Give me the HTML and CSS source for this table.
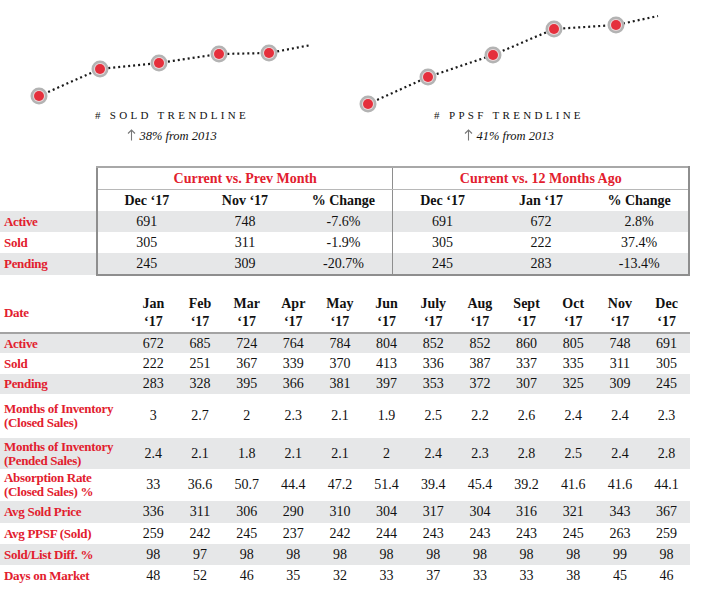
FILE: index.html
```html
<!DOCTYPE html>
<html lang="en">
<head>
<meta charset="utf-8">
<title>Market Report</title>
<link rel="stylesheet" href="styles.css">
</head>
<body>
<div class="charts">
  <div class="chart">
    <svg class="plot" width="351" height="106" viewBox="0 0 351 106">
      <polyline class="dots" points="39,96 100,69 159,63 219,54 269,53 311,45"/>
      <g><circle class="ring" cx="39" cy="96" r="8.5"/><circle class="halo" cx="39" cy="96" r="6"/><circle class="core" cx="39" cy="96" r="5"/></g>
      <g><circle class="ring" cx="100" cy="69" r="8.5"/><circle class="halo" cx="100" cy="69" r="6"/><circle class="core" cx="100" cy="69" r="5"/></g>
      <g><circle class="ring" cx="159" cy="63" r="8.5"/><circle class="halo" cx="159" cy="63" r="6"/><circle class="core" cx="159" cy="63" r="5"/></g>
      <g><circle class="ring" cx="219" cy="54" r="8.5"/><circle class="halo" cx="219" cy="54" r="6"/><circle class="core" cx="219" cy="54" r="5"/></g>
      <g><circle class="ring" cx="269" cy="53" r="8.5"/><circle class="halo" cx="269" cy="53" r="6"/><circle class="core" cx="269" cy="53" r="5"/></g>
    </svg>
    <div class="cap cap-left">
      <div class="cap-title"># SOLD TRENDLINE</div>
      <div class="cap-sub"><svg class="arrow" width="9" height="12" viewBox="0 0 9 12"><path d="M4.5 11.5V1M1 4.5L4.5 1L8 4.5"/></svg> 38% from 2013</div>
    </div>
  </div>
  <div class="chart">
    <svg class="plot" width="351" height="106" viewBox="0 0 351 106">
      <polyline class="dots" points="17,104 77,77 142,55 203,29 265,25 307,16"/>
      <g><circle class="ring" cx="17" cy="104" r="8.5"/><circle class="halo" cx="17" cy="104" r="6"/><circle class="core" cx="17" cy="104" r="5"/></g>
      <g><circle class="ring" cx="77" cy="77" r="8.5"/><circle class="halo" cx="77" cy="77" r="6"/><circle class="core" cx="77" cy="77" r="5"/></g>
      <g><circle class="ring" cx="142" cy="55" r="8.5"/><circle class="halo" cx="142" cy="55" r="6"/><circle class="core" cx="142" cy="55" r="5"/></g>
      <g><circle class="ring" cx="203" cy="29" r="8.5"/><circle class="halo" cx="203" cy="29" r="6"/><circle class="core" cx="203" cy="29" r="5"/></g>
      <g><circle class="ring" cx="265" cy="25" r="8.5"/><circle class="halo" cx="265" cy="25" r="6"/><circle class="core" cx="265" cy="25" r="5"/></g>
    </svg>
    <div class="cap cap-right">
      <div class="cap-title"># PPSF TRENDLINE</div>
      <div class="cap-sub"><svg class="arrow" width="9" height="12" viewBox="0 0 9 12"><path d="M4.5 11.5V1M1 4.5L4.5 1L8 4.5"/></svg> 41% from 2013</div>
    </div>
  </div>
</div>

<table class="cmp">
  <colgroup><col class="col-lab"><col class="col-d"><col class="col-d"><col class="col-d"><col class="col-d"><col class="col-d"><col class="col-d"></colgroup>
  <tr class="r-title">
    <td class="lab"></td>
    <th colspan="3" class="grp first">Current vs. Prev Month</th>
    <th colspan="3" class="grp mid end">Current vs. 12 Months Ago</th>
  </tr>
  <tr class="r-head">
    <td class="lab"></td>
    <th class="first">Dec ‘17</th><th>Nov ‘17</th><th>% Change</th>
    <th class="mid">Dec ‘17</th><th>Jan ‘17</th><th class="end">% Change</th>
  </tr>
  <tr class="shade">
    <td class="lab">Active</td>
    <td class="first">691</td><td>748</td><td>-7.6%</td>
    <td class="mid">691</td><td>672</td><td class="end">2.8%</td>
  </tr>
  <tr>
    <td class="lab">Sold</td>
    <td class="first">305</td><td>311</td><td>-1.9%</td>
    <td class="mid">305</td><td>222</td><td class="end">37.4%</td>
  </tr>
  <tr class="shade r-last">
    <td class="lab">Pending</td>
    <td class="first">245</td><td>309</td><td>-20.7%</td>
    <td class="mid">245</td><td>283</td><td class="end">-13.4%</td>
  </tr>
</table>

<table class="mkt">
  <colgroup><col class="col-lab2"><col span="12" class="col-m"></colgroup>
  <thead>
    <tr>
      <th class="lab">Date</th>
      <th>Jan<br>‘17</th><th>Feb<br>‘17</th><th>Mar<br>‘17</th><th>Apr<br>‘17</th><th>May<br>‘17</th><th>Jun<br>‘17</th>
      <th>July<br>‘17</th><th>Aug<br>‘17</th><th>Sept<br>‘17</th><th>Oct<br>‘17</th><th>Nov<br>‘17</th><th>Dec<br>‘17</th>
    </tr>
  </thead>
  <tbody>
    <tr class="shade h19"><td class="lab">Active</td><td>672</td><td>685</td><td>724</td><td>764</td><td>784</td><td>804</td><td>852</td><td>852</td><td>860</td><td>805</td><td>748</td><td>691</td></tr>
    <tr class="h21"><td class="lab">Sold</td><td>222</td><td>251</td><td>367</td><td>339</td><td>370</td><td>413</td><td>336</td><td>387</td><td>337</td><td>335</td><td>311</td><td>305</td></tr>
    <tr class="shade h20"><td class="lab">Pending</td><td>283</td><td>328</td><td>395</td><td>366</td><td>381</td><td>397</td><td>353</td><td>372</td><td>307</td><td>325</td><td>309</td><td>245</td></tr>
    <tr class="h44"><td class="lab">Months of Inventory<br>(Closed Sales)</td><td>3</td><td>2.7</td><td>2</td><td>2.3</td><td>2.1</td><td>1.9</td><td>2.5</td><td>2.2</td><td>2.6</td><td>2.4</td><td>2.4</td><td>2.3</td></tr>
    <tr class="shade h31"><td class="lab">Months of Inventory<br>(Pended Sales)</td><td>2.4</td><td>2.1</td><td>1.8</td><td>2.1</td><td>2.1</td><td>2</td><td>2.4</td><td>2.3</td><td>2.8</td><td>2.5</td><td>2.4</td><td>2.8</td></tr>
    <tr class="h32"><td class="lab">Absorption Rate<br>(Closed Sales) %</td><td>33</td><td>36.6</td><td>50.7</td><td>44.4</td><td>47.2</td><td>51.4</td><td>39.4</td><td>45.4</td><td>39.2</td><td>41.6</td><td>41.6</td><td>44.1</td></tr>
    <tr class="shade h22"><td class="lab">Avg Sold Price</td><td>336</td><td>311</td><td>306</td><td>290</td><td>310</td><td>304</td><td>317</td><td>304</td><td>316</td><td>321</td><td>343</td><td>367</td></tr>
    <tr class="h21"><td class="lab">Avg PPSF (Sold)</td><td>259</td><td>242</td><td>245</td><td>237</td><td>242</td><td>244</td><td>243</td><td>243</td><td>243</td><td>245</td><td>263</td><td>259</td></tr>
    <tr class="shade h21"><td class="lab">Sold/List Diff. %</td><td>98</td><td>97</td><td>98</td><td>98</td><td>98</td><td>98</td><td>98</td><td>98</td><td>98</td><td>98</td><td>99</td><td>98</td></tr>
    <tr class="h21"><td class="lab">Days on Market</td><td>48</td><td>52</td><td>46</td><td>35</td><td>32</td><td>33</td><td>37</td><td>33</td><td>33</td><td>38</td><td>45</td><td>46</td></tr>
  </tbody>
</table>
</body>
</html>
```

FILE: styles.css
```css
html, body {
  margin: 0;
  padding: 0;
  background: #ffffff;
}
body {
  width: 702px;
  height: 594px;
  overflow: hidden;
  font-family: "Liberation Serif", "Times New Roman", serif;
  color: #111111;
}

/* ---------- trend charts ---------- */
.charts {
  display: flex;
  height: 166px;
}
.chart {
  width: 351px;
}
.plot {
  display: block;
  overflow: visible;
}
.dots {
  fill: none;
  stroke: #1a1a1a;
  stroke-width: 2.2;
  stroke-dasharray: 2 3;
}
.ring { fill: #b3b3b3; }
.halo { fill: #e9d6d8; }
.core { fill: #e52f3c; }

.cap {
  text-align: center;
}
.cap-left { padding-right: 7px; }
.cap-right { padding-right: 35px; }
.cap-title {
  font-size: 11px;
  letter-spacing: 3.3px;
  line-height: 18px;
  color: #111;
}
.cap-sub {
  margin-top: 3px;
  font-size: 12.5px;
  font-style: italic;
  line-height: 18px;
  color: #111;
}
.arrow {
  vertical-align: -1px;
}
.arrow path {
  fill: none;
  stroke: #777;
  stroke-width: 1.1;
}

/* ---------- comparison table ---------- */
table {
  border-collapse: collapse;
  table-layout: fixed;
  border-spacing: 0;
}
.cmp {
  width: 690px;
}
.col-lab { width: 97px; }
.cmp th, .cmp td {
  padding: 0;
  text-align: center;
  font-size: 14px;
  height: 21px;
  line-height: 16px;
}
.cmp th {
  font-weight: bold;
  color: #111;
}
.cmp .grp {
  color: #e2202e;
  border-top: 2px solid #a8a8a8;
  border-bottom: 1px solid #b8b8b8;
}
.cmp .first { border-left: 2px solid #8e8e8e; }
.cmp .mid { border-left: 1px solid #8e8e8e; }
.cmp .end { border-right: 2px solid #8e8e8e; }
.cmp .r-last td { border-bottom: 2px solid #8e8e8e; }
.cmp .r-last td.lab { border-bottom: none; }
.cmp td.lab, .mkt .lab {
  text-align: left;
  padding-left: 4px;
  font-weight: bold;
  font-size: 13px;
  letter-spacing: -0.3px;
  color: #e2202e;
}
.shade td {
  background: #e6e7e8;
}

/* ---------- monthly table ---------- */
.mkt {
  width: 690px;
  margin-top: 16px;
}
.col-lab2 { width: 130px; }
.mkt th {
  font-size: 14px;
  font-weight: bold;
  line-height: 18px;
  text-align: center;
  padding: 3px 0 1px;
  vertical-align: middle;
  border-bottom: 2px solid #a3a3a3;
}
.mkt thead .lab {
  padding-left: 4px;
}
.mkt td {
  padding: 0;
  text-align: center;
  font-size: 14px;
  line-height: 16px;
  vertical-align: middle;
}
.mkt td.lab {
  line-height: 14px;
}
.h19 td { height: 19px; }
.h20 td { height: 20px; }
.h21 td { height: 21px; }
.h22 td { height: 22px; }
.h31 td { height: 31px; }
.h32 td { height: 32px; }
.h44 td { height: 44px; }
```
